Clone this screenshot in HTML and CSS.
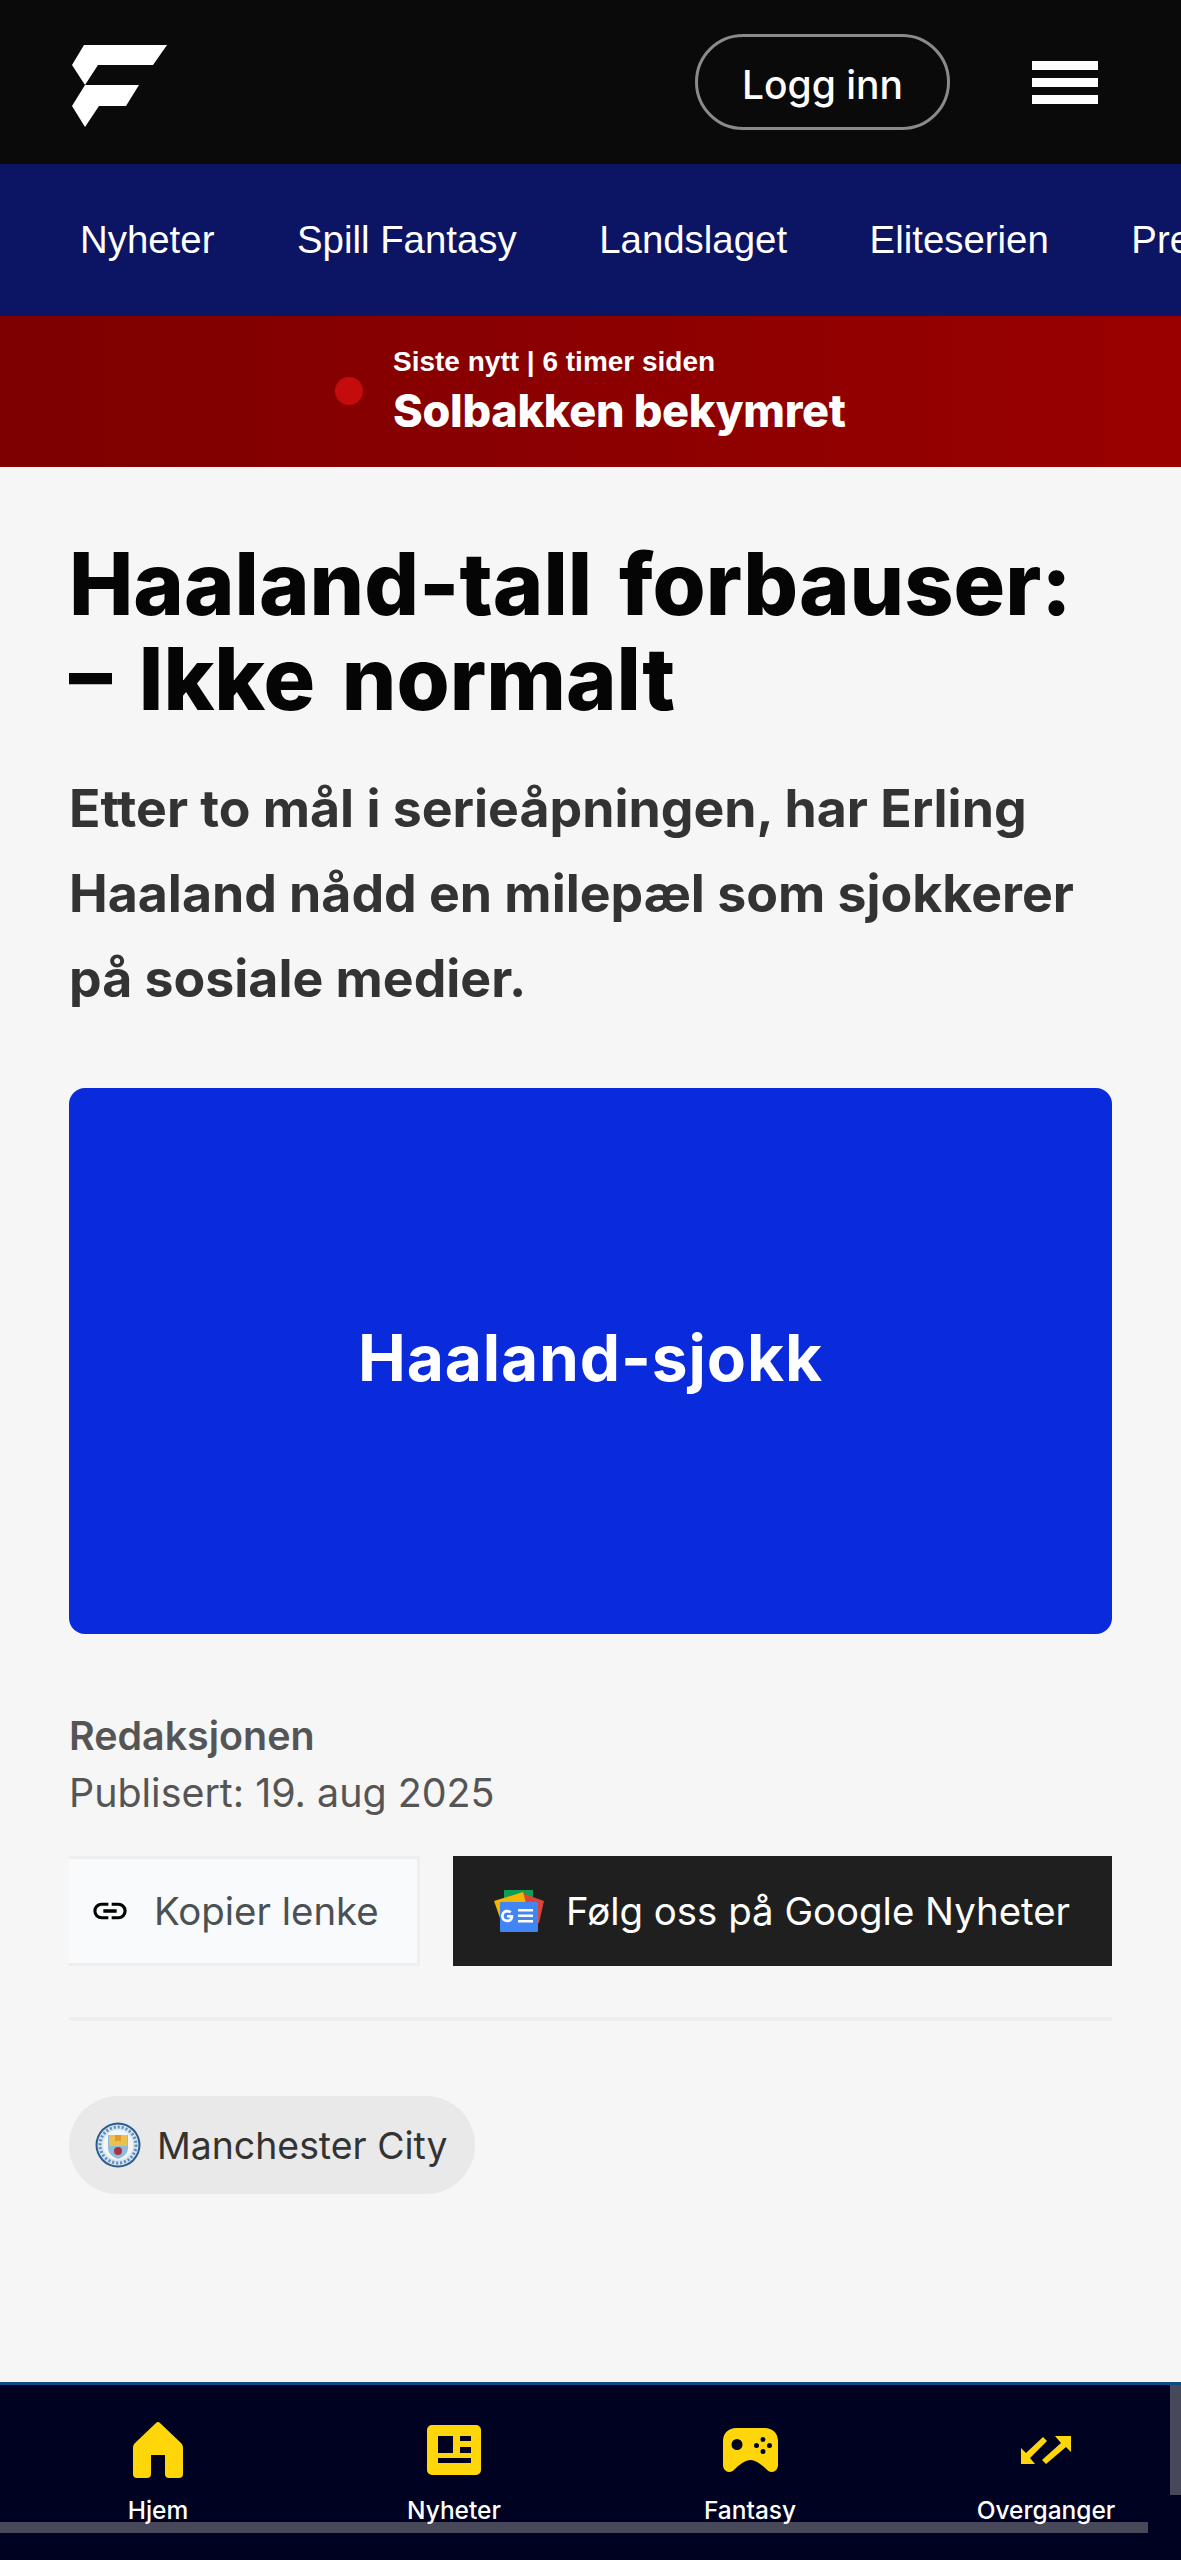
FILE: index.html
```html
<!DOCTYPE html>
<html lang="nb">
<head>
<meta charset="utf-8">
<title>Haaland-tall forbauser</title>
<link rel="stylesheet" href="styles.css">
</head>
<body>
<header class="topbar">
  <svg class="logo" viewBox="0 0 96 83" aria-label="Logo"><path d="M95 0H12L0 20l13 20 13-20h55z"/><path d="M67 40H13L0 61l13 21 14-21h27z"/></svg>
  <div class="top-actions">
    <a class="login">Logg inn</a>
    <div class="burger"><span></span><span></span><span></span></div>
  </div>
</header>
<nav class="mainnav">
  <a>Nyheter</a><a>Spill Fantasy</a><a>Landslaget</a><a>Eliteserien</a><a>Premier League</a>
</nav>
<section class="breaking">
  <span class="dot"></span>
  <div class="b-text">
    <div class="b-meta">Siste nytt | 6 timer siden</div>
    <div class="b-title">Solbakken bekymret</div>
  </div>
</section>
<main class="article">
  <h1>Haaland-tall forbauser:<br>– Ikke normalt</h1>
  <p class="lead">Etter to mål i serieåpningen, har Erling Haaland nådd en milepæl som sjokkerer på sosiale medier.</p>
  <div class="hero">Haaland-sjokk</div>
  <div class="author">Redaksjonen</div>
  <div class="published">Publisert: 19. aug 2025</div>
  <div class="actions">
    <button class="copy">
      <svg class="link-icon" viewBox="0 0 24 24"><path d="M3.900 12c0-1.700 1.400-3.100 3.100-3.100h4V7H7a5 5 0 0 0 0 10h4v-1.900H7c-1.700 0-3.100-1.400-3.100-3.100zM8 13h8v-2H8v2zm9-6h-4v1.900h4a3.100 3.100 0 0 1 0 6.200h-4V17h4a5 5 0 0 0 0-10z"/></svg>
      Kopier lenke
    </button>
    <button class="gnews">
      <svg class="gn-icon" viewBox="0 0 50 42"><rect x="10" y="0" width="29" height="14" fill="#0f9d58"/><path d="M28 3l22 8-5 22H30z" fill="#db4437"/><path d="M0 11l29-9 7 26H6z" fill="#f4b400"/><rect x="6" y="12" width="38" height="30" rx="1" fill="#4285f4"/><path d="M19 25h-6v2.600h3.300c-.5 1.400-1.700 2-3 2a3.600 3.600 0 0 1 0-7.200c1 0 1.800.3 2.400.9l1.900-1.900a6.300 6.300 0 1 0-4.300 10.900c3.700 0 6-2.600 6-6.300z" fill="#fff"/><path d="M24 19h15v2.600H24zM24 24.500h15v2.600H24zM24 30h15v2.600H24z" fill="#fff"/></svg>
      Følg oss på Google Nyheter
    </button>
  </div>
  <hr class="rule">
  <a class="chip">
    <svg class="crest" viewBox="0 0 46 46"><circle cx="23" cy="23" r="22.500" fill="#2b5a8f"/><circle cx="23" cy="23" r="20.500" fill="#d4e4f0"/><circle cx="23" cy="23" r="18" fill="none" stroke="#5f8fb8" stroke-width="3" stroke-dasharray="2 2"/><circle cx="23" cy="23" r="15" fill="#f2f4f6"/><path d="M13 13h20v13c0 6-5 9-10 11-5-2-10-5-10-11z" fill="#8fbbdc"/><path d="M14 13h18v11H14z" fill="#e8c14e"/><path d="M20 13h6v6h-6z" fill="#e39a2a"/><circle cx="23" cy="29" r="4" fill="#a83245"/></svg>
    Manchester City
  </a>
</main>
<nav class="tabbar">
  <a class="tab">
    <svg class="ic-home" viewBox="0 0 50 56"><path d="M25 0a3 3 0 0 0-2 1L2 21c-1.300 1.300-2 3-2 5v26a4 4 0 0 0 4 4h10a4 4 0 0 0 4-4V33h14v19a4 4 0 0 0 4 4h10a4 4 0 0 0 4-4V26c0-2-.7-3.700-2-5L27 1a3 3 0 0 0-2-1z"/></svg>
    <span>Hjem</span>
  </a>
  <a class="tab">
    <svg class="ic-news" viewBox="0 0 54 50"><path fill-rule="evenodd" d="M5 0h44a5 5 0 0 1 5 5v40a5 5 0 0 1-5 5H5a5 5 0 0 1-5-5V5a5 5 0 0 1 5-5zm6 11v17h15V11zm22 0v5h11v-5zm0 11v6h11v-6zM11 33v5h33v-5z"/></svg>
    <span>Nyheter</span>
  </a>
  <a class="tab">
    <svg class="ic-game" viewBox="0 0 55 44"><path fill-rule="evenodd" d="M13 0h29c7 0 13 5 13 13v24c0 4-3 7-6 7-3 0-5-2-8-5-5-4-9-7-13.500-7S19 35 14 39c-3 3-5 5-8 5-3 0-6-3-6-7V13C0 5 6 0 13 0zm1 11a5.500 5.500 0 1 0 0 11 5.500 5.500 0 0 0 0-11zm26-2a2.500 2.500 0 1 0 0 5 2.500 2.500 0 0 0 0-5zm-6.500 6a2.500 2.500 0 1 0 0 5 2.500 2.500 0 0 0 0-5zm13 0a2.500 2.500 0 1 0 0 5 2.500 2.500 0 0 0 0-5zM40 21a2.500 2.500 0 1 0 0 5 2.500 2.500 0 0 0 0-5z"/></svg>
    <span>Fantasy</span>
  </a>
  <a class="tab">
    <svg class="ic-swap" viewBox="0 0 50 28"><path d="M34 0h16v16l-5-5-20 17-4-4 19-17zM0 12l5 5L22 1l4 4L9 22l5 6H0z"/></svg>
    <span>Overganger</span>
  </a>
  <div class="sb-h"></div>
  <div class="sb-v"></div>
</nav>
</body>
</html>
```
FILE: styles.css
```css
* { box-sizing: border-box; }
html, body { margin: 0; padding: 0; }
body {
  width: 1181px;
  height: 2560px;
  overflow: hidden;
  position: relative;
  background: #f6f6f6;
  font-family: Inter, "Liberation Sans", sans-serif;
}
a { color: inherit; text-decoration: none; }

.topbar {
  height: 164px;
  background: #0a0a0a;
  display: flex;
  align-items: center;
  justify-content: space-between;
  padding: 0 83px 0 72px;
}
.logo { width: 96px; height: 83px; fill: #fff; margin-top: 9px; }
.top-actions { display: flex; align-items: center; gap: 82px; }
.login {
  width: 255px;
  height: 96px;
  border: 3px solid #8a8a8a;
  border-radius: 48px;
  color: #fff;
  font-size: 39px;
  font-weight: 500;
  padding-top: 4px;
  display: flex;
  align-items: center;
  justify-content: center;
}
.burger { width: 66px; display: flex; flex-direction: column; gap: 8px; }
.burger span { height: 9px; background: #fff; display: block; }

.mainnav {
  height: 152px;
  background: #0c1464;
  display: flex;
  align-items: center;
  gap: 82.500px;
  padding-left: 80px;
  white-space: nowrap;
  overflow: hidden;
  color: #fff;
  font-family: "Liberation Sans", Arial, sans-serif;
  font-size: 38.400px;
}

.breaking {
  height: 151px;
  background: linear-gradient(90deg, #7e0000, #9a0000);
  display: flex;
  align-items: center;
  padding-left: 335px;
  gap: 30px;
  color: #fff;
}
.dot { width: 28px; height: 28px; border-radius: 50%; background: #c40c0c; margin-top: -2px; }
.b-text { padding-top: 3px; }
.b-meta { font-family: "Liberation Sans", Arial, sans-serif; font-size: 28px; font-weight: 700; line-height: 32px; margin-top: -5px; }
.b-title { font-size: 45px; font-weight: 800; letter-spacing: -0.3px; line-height: 50px; margin-top: 8px; }

.article { padding: 70px 69px 0; }
h1 {
  margin: 0;
  font-size: 86px;
  line-height: 95px;
  font-weight: 800;
  word-spacing: 8px;
  color: #050505;
}
.lead {
  margin: 39px 0 0;
  font-size: 51.800px;
  line-height: 85px;
  font-weight: 700;
  color: #333;
}
.hero {
  margin-top: 67px;
  height: 546px;
  border-radius: 16px;
  background: #0a2bdb;
  color: #fff;
  font-size: 64px;
  font-weight: 700;
  letter-spacing: 0.900px;
  padding-bottom: 8px;
  display: flex;
  align-items: center;
  justify-content: center;
}
.author { margin-top: 77px; font-size: 39.400px; line-height: 50px; font-weight: 600; color: #555; }
.published { margin-top: 7px; font-size: 39.400px; line-height: 50px; color: #555; }
.actions { display: flex; gap: 33px; margin-top: 38px; }
.copy, .gnews {
  height: 110px;
  font: inherit;
  font-size: 38.400px;
  display: flex;
  align-items: center;
  padding: 0;
}
.copy {
  width: 351px;
  background: #f8fafc;
  border: 3px solid #eeeeee;
  border-left: 0;
  color: #4b5055;
  padding-left: 21px;
  gap: 24px;
}
.link-icon { width: 40px; height: 40px; fill: #000; }
.gnews {
  width: 659px;
  background: #1f1f1f;
  border: 0;
  color: #fff;
  padding-left: 41px;
  gap: 22px;
}
.gn-icon { width: 50px; height: 42px; }
.rule { margin: 51px 0 0; border: 0; height: 4px; background: #eceef0; }
.chip {
  margin-top: 75px;
  width: 406px;
  height: 98px;
  border-radius: 50px;
  background: #e9e9e9;
  color: #333;
  font-size: 37.400px;
  display: flex;
  align-items: center;
  padding-left: 26px;
  gap: 16px;
}
.crest { width: 46px; height: 46px; }

.tabbar {
  position: fixed;
  left: 0;
  right: 0;
  bottom: 0;
  height: 178px;
  background: #000222;
  border-top: 3px solid #0f4a86;
  display: grid;
  grid-template-columns: repeat(4, 296px);
  padding-left: 10px;
  overflow: hidden;
}
.tab {
  display: flex;
  flex-direction: column;
  align-items: center;
  color: #fff;
  font-size: 24.500px;
  font-weight: 500;
  height: 140px;
  position: relative;
}
.tab svg { fill: #ffd60a; position: absolute; }
.tab span { position: absolute; top: 110px; line-height: 30px; white-space: nowrap; z-index: 1; }
.ic-home { width: 50px; height: 56px; top: 37px; }
.ic-news { width: 54px; height: 50px; top: 40px; }
.ic-game { width: 55px; height: 44px; top: 43px; }
.ic-swap { width: 50px; height: 28px; top: 51px; }
.sb-h { position: absolute; left: 0; top: 137px; width: 1148px; height: 11px; background: #474859; }
.sb-v { position: absolute; right: 0; top: 0; width: 11px; height: 110px; background: #474859; }
```
